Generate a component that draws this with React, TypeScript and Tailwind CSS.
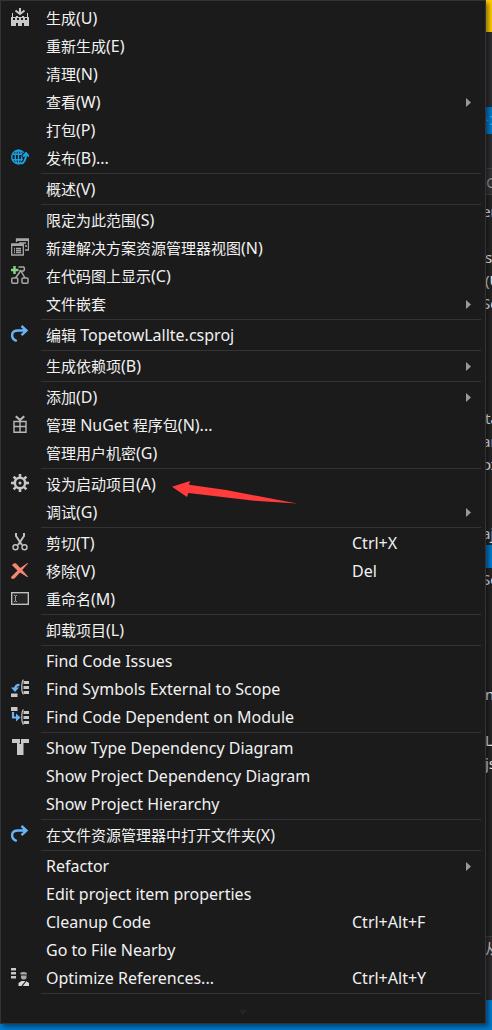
import React from 'react';

type IconName =
  | 'build' | 'publish' | 'views' | 'codemap' | 'redo' | 'gift' | 'gear'
  | 'cut' | 'remove' | 'rename' | 'external' | 'dependent' | 'types' | 'optimize';

type Item = { label: string; icon?: IconName; keys?: string; sub?: boolean; arrow?: boolean };

const groups: Item[][] = [
  [
    { label: '生成(U)', icon: 'build' },
    { label: '重新生成(E)' },
    { label: '清理(N)' },
    { label: '查看(W)', sub: true },
    { label: '打包(P)' },
    { label: '发布(B)...', icon: 'publish' },
  ],
  [{ label: '概述(V)' }],
  [
    { label: '限定为此范围(S)' },
    { label: '新建解决方案资源管理器视图(N)', icon: 'views' },
    { label: '在代码图上显示(C)', icon: 'codemap' },
    { label: '文件嵌套', sub: true },
  ],
  [{ label: '编辑 TopetowLallte.csproj', icon: 'redo' }],
  [{ label: '生成依赖项(B)', sub: true }],
  [
    { label: '添加(D)', sub: true },
    { label: '管理 NuGet 程序包(N)...', icon: 'gift' },
    { label: '管理用户机密(G)' },
  ],
  [
    { label: '设为启动项目(A)', icon: 'gear', arrow: true },
    { label: '调试(G)', sub: true },
  ],
  [
    { label: '剪切(T)', icon: 'cut', keys: 'Ctrl+X' },
    { label: '移除(V)', icon: 'remove', keys: 'Del' },
    { label: '重命名(M)', icon: 'rename' },
  ],
  [{ label: '卸载项目(L)' }],
  [
    { label: 'Find Code Issues' },
    { label: 'Find Symbols External to Scope', icon: 'external' },
    { label: 'Find Code Dependent on Module', icon: 'dependent' },
  ],
  [
    { label: 'Show Type Dependency Diagram', icon: 'types' },
    { label: 'Show Project Dependency Diagram' },
    { label: 'Show Project Hierarchy' },
  ],
  [{ label: '在文件资源管理器中打开文件夹(X)', icon: 'redo' }],
  [
    { label: 'Refactor', sub: true },
    { label: 'Edit project item properties' },
    { label: 'Cleanup Code', keys: 'Ctrl+Alt+F' },
    { label: 'Go to File Nearby' },
    { label: 'Optimize References...', icon: 'optimize', keys: 'Ctrl+Alt+Y' },
  ],
];

const drawings: Record<IconName, React.ReactNode> = {
  build: (
    <>
      <path d="M9 0v6M4.500 2.500L9 6l4.500-3.500" fill="none" stroke="#c8c8c8" strokeWidth="2" />
      <path
        fillRule="evenodd"
        fill="#c8c8c8"
        d="M1 5h1v4h3V8h2v1h4V8h2v1h3V5h1v4h1v9H0V9h1zM2 10v2h2v-2zM6 10v2h2v-2zM10 10v2h2v-2zM14 10v2h2v-2zM5 15v3h2v-3zM11 15v3h2v-3z"
      />
    </>
  ),
  publish: (
    <g fill="none" stroke="#1ba1e2" strokeWidth="1.400">
      <circle cx="7.500" cy="9" r="6.800" />
      <ellipse cx="7.500" cy="9" rx="3.300" ry="6.800" />
      <path d="M7.500 2v14M1.500 6.300h12M1.500 11.700h12" />
      <path d="M10 15.500c4-.5 5-4 5-10M11.500 9l3.500-4 3.500 4" stroke="#1b1b1c" strokeWidth="4" />
      <path d="M10 15.500c4-.5 5-4 5-10M12 8.500l3-3.500 3 3.500" strokeWidth="2" />
    </g>
  ),
  views: (
    <g fill="none" stroke="#a8a8a8" strokeWidth="1.300">
      <path d="M5.500 4V1h12v11H14" />
      <path d="M5.500 2h12" strokeWidth="2" />
      <path d="M8 5h7M14 8h2" />
      <path d="M.7 6h11.600v11H.7z" />
      <path d="M.7 7h11.600" strokeWidth="2" />
      <path d="M3 10.500h1M5 10.500h5M3 12.500h1M5 12.500h5M3 14.500h1M5 14.500h5" />
    </g>
  ),
  codemap: (
    <>
      <g fill="none" stroke="#a8a8a8" strokeWidth="1.500">
        <path d="M7.500 1h5l.8.8V4l-.8 1H9.500L8.700 4" />
        <path d="M9.500 5L4.500 12M10 5l4 7" />
        <rect x=".8" y="12" width="6" height="5.200" rx="1" />
        <rect x="11" y="12" width="6" height="5.200" rx="1" />
      </g>
      <path d="M3.500 0v8M0 4h7.500" stroke="#89d185" strokeWidth="2.500" />
    </>
  ),
  redo: (
    <path
      d="M5.800 16C-.8 13.500-.5 5.500 7 5.500h8.500M10.500 1l5 4.500-5 4.700"
      fill="none"
      stroke="#66b5f8"
      strokeWidth="2.400"
    />
  ),
  gift: (
    <g fill="none" stroke="#b8b8b8" strokeWidth="1.400">
      <path d="M3 6.500h12v10.800H3zM9 5v12.300M3 11.500h12" />
      <path d="M4.800 1.200L9 5l4.200-3.800" strokeWidth="2.200" />
    </g>
  ),
  gear: (
    <>
      <circle cx="9" cy="9" r="5.200" fill="none" stroke="#c8c8c8" strokeWidth="2.600" />
      <path d="M9 0v4M9 14v4M0 9h4M14 9h4M2.600 2.600l3 3M12.400 12.400l3 3M15.400 2.600l-3 3M5.600 12.400l-3 3" stroke="#c8c8c8" strokeWidth="2.600" />
      <circle cx="9" cy="9" r="1.500" fill="#c8c8c8" />
    </>
  ),
  cut: (
    <g fill="none" stroke="#c0c0c0">
      <path d="M5 0v3l6 9M13 0v3L7 12" strokeWidth="2" />
      <circle cx="4.500" cy="14.300" r="2.500" strokeWidth="1.400" />
      <circle cx="13.500" cy="14.300" r="2.500" strokeWidth="1.400" />
    </g>
  ),
  remove: (
    <path
      d="M0 16L6.500 9.500 1 4.200 2.500 2.500 4.800 2.200 9.300 7 16.500 2 17 2.500 11.200 9 17 15.500 16.500 16.200 9 11.500 3.500 17.500.8 18z"
      fill="#f48771"
    />
  ),
  rename: (
    <>
      <rect x=".7" y="3.700" width="16.600" height="11.600" fill="#252526" stroke="#c8c8c8" strokeWidth="1.300" />
      <path d="M3 6.500h1l.5.5.5-.5h1M4.500 7v5M3 12.500h1l.5-.5.500.5h1" fill="none" stroke="#a0a0a0" />
    </>
  ),
  external: (
    <>
      <path d="M8.500 5.800C6 5.800 4 7 4 10.500" fill="none" stroke="#66b5f8" strokeWidth="2.200" />
      <path d="M0 8.500h8L4 13z" fill="#66b5f8" />
      <path d="M0 14.500h6.500V18H0zM12.500 2H18v3h-5.500zM12.500 7H18v3h-5.500zM12.500 12H18v3h-5.500z" fill="#c8c8c8" />
      <path d="M12.500.8c-1.700 1-1.700 3-1.700 7.500s0 6 1.700 7" fill="none" stroke="#c8c8c8" strokeWidth="1.200" />
    </>
  ),
  dependent: (
    <>
      <path d="M2 5v5.500h4" fill="none" stroke="#66b5f8" strokeWidth="2.200" />
      <path d="M5 6.500l4.500 4L5 14.500z" fill="#66b5f8" />
      <path d="M0 0h6.500v4H0zM12.500 4H18v3h-5.500zM12.500 9H18v3h-5.500zM12.500 14H18v3h-5.500z" fill="#c8c8c8" />
      <path d="M12.500 2.500c-1.700 1-1.700 3-1.700 7.500s0 6 1.700 7.500" fill="none" stroke="#c8c8c8" strokeWidth="1.200" />
    </>
  ),
  types: (
    <path d="M1 1h8v4H1zM10 1h8v4h-8zM6 6h6.500v11H6zM6 4h2.500v3H6zM10 4h2.500v3H10z" fill="#c8c8c8" />
  ),
  optimize: (
    <>
      <path d="M0 0h5v2.500H0zM0 4h5v2.500H0zM0 8h5v2.500H0z" fill="#c8c8c8" />
      <path d="M9 5c2-1.500 5-1.500 7 0l-.5 2v3c-1 2-4.500 2-5.500 0V7z" fill="#a8a8a8" />
      <path d="M9.500 7h6" stroke="#1b1b1c" />
      <path d="M7.500 18v-3l3-2h4.500l3 2v3z" fill="#d8d8d8" />
      <path d="M11 18l4-5" stroke="#1b1b1c" strokeWidth="1.200" />
    </>
  ),
};

function Icon({ name }: { name: IconName }) {
  return (
    <svg viewBox="0 0 18 18" className="h-[18px] w-[18px]" aria-hidden="true">
      {drawings[name]}
    </svg>
  );
}

/* Latin runs are set one step larger than the Chinese characters beside them. */
function Label({ text }: { text: string }) {
  return (
    <span className="flex-1 text-base leading-[22px] whitespace-nowrap">
      {text.split(/([\u4e00-\u9fff]+)/).map((run, i) =>
        i % 2 === 1 ? (
          <span key={i} className="text-[15px]">
            {run}
          </span>
        ) : (
          run
        ),
      )}
    </span>
  );
}

function MenuItem({ item }: { item: Item }) {
  return (
    <button
      type="button"
      role="menuitem"
      aria-haspopup={item.sub ? 'menu' : undefined}
      className="relative flex h-7 w-full items-center text-left hover:bg-[#333334]"
    >
      <span className="flex w-[45px] shrink-0 pb-0.5 pl-2.5">{item.icon && <Icon name={item.icon} />}</span>
      <Label text={item.label} />
      {item.keys && <span className="w-[114px] shrink-0 text-base leading-[22px]">{item.keys}</span>}
      <span className="w-[19px] shrink-0">
        {item.sub && (
          <svg viewBox="0 0 5 9" className="h-[9px] w-[5px]" aria-hidden="true">
            <path d="M0 0l5 4.500L0 9z" fill="#999999" />
          </svg>
        )}
      </span>
      {item.arrow && (
        <svg viewBox="0 0 126 24" className="absolute top-[10px] left-[171px] h-6 w-[126px]" aria-hidden="true">
          <path d="M0 6.700L18 1 17 4.700 54 10 125 23.500 80 20.500 16.300 13 15 17z" fill="#ff3b3b" />
        </svg>
      )}
    </button>
  );
}

type CodeLine = { text: string; tucked?: boolean };

const codeLines: Record<number, CodeLine> = {
  0: { text: 'en', tucked: true },
  2: { text: 'se' },
  3: { text: '(U' },
  4: { text: 'Se', tucked: true },
  9: { text: 'ta' },
  10: { text: 'ar', tucked: true },
  11: { text: 'ox', tucked: true },
  14: { text: 'aj', tucked: true },
  16: { text: 'Se', tucked: true },
  21: { text: 'n' },
  23: { text: 'L' },
  24: { text: 'js' },
};

function EditorBehind() {
  return (
    <div className="absolute inset-0 flex flex-col bg-[#252526]" aria-hidden="true">
      <div className="h-8 bg-[#ffcc00]" />
      <div className="h-[75px] bg-[#2d2d30]" />
      <div className="flex h-[27px] items-center justify-end bg-[#007acc] text-xs text-[#60b5ee]">
        <span className="w-1.5 overflow-hidden">⁘</span>
      </div>
      <div className="h-[34px] bg-[#2d2d30]" />
      <div className="flex h-[27px] items-center justify-end border-y border-[#434346] bg-[#333337] text-[#999999]">
        <span className="w-1.5 overflow-hidden">C</span>
      </div>
      <div className="flex flex-1 flex-col items-end pt-[5px]">
        {Array.from({ length: 31 }, (_, i) => {
          const line = codeLines[i];
          if (i === 15) return <div key={i} className="h-[23px] w-full bg-[#007acc]" />;
          return (
            <div
              key={i}
              className={
                line?.tucked
                  ? 'h-[23px] w-2.5 overflow-hidden text-[#f1f1f1]'
                  : 'h-[23px] w-[7px] overflow-hidden text-[#f1f1f1]'
              }
            >
              {line?.text}
            </div>
          );
        })}
      </div>
      <div className="flex h-16 justify-end border-t border-[#3f3f46] bg-[#2d2d30] text-[#d0d0d0]">
        <span className="w-[7px] overflow-hidden">从</span>
      </div>
      <div className="h-[30px] bg-[#007acc]" />
    </div>
  );
}

export default function App() {
  return (
    <main className="relative overflow-hidden pr-1.5 pb-1.5 font-['Noto_Sans','Noto_Sans_CJK_SC',sans-serif] text-[15px] leading-[22px] text-[#f1f1f1]">
      <EditorBehind />
      <div
        role="menu"
        className="relative border border-[#333337] bg-[#1b1b1c] pt-[3px] shadow-[3px_3px_4px_rgba(0,0,0,0.4)]"
      >
        {groups.map((items, i) => (
          <React.Fragment key={i}>
            {items.map((item) => (
              <MenuItem key={item.label} item={item} />
            ))}
            <div role="separator" className="mt-px mr-1 mb-px ml-10 h-px bg-[#333337]" />
          </React.Fragment>
        ))}
        <div className="flex h-7 items-center justify-center pt-1.5">
          <svg viewBox="0 0 8 5" className="h-[5px] w-2" aria-hidden="true">
            <path d="M0 0h8L4 5z" fill="#252527" />
          </svg>
        </div>
      </div>
    </main>
  );
}
